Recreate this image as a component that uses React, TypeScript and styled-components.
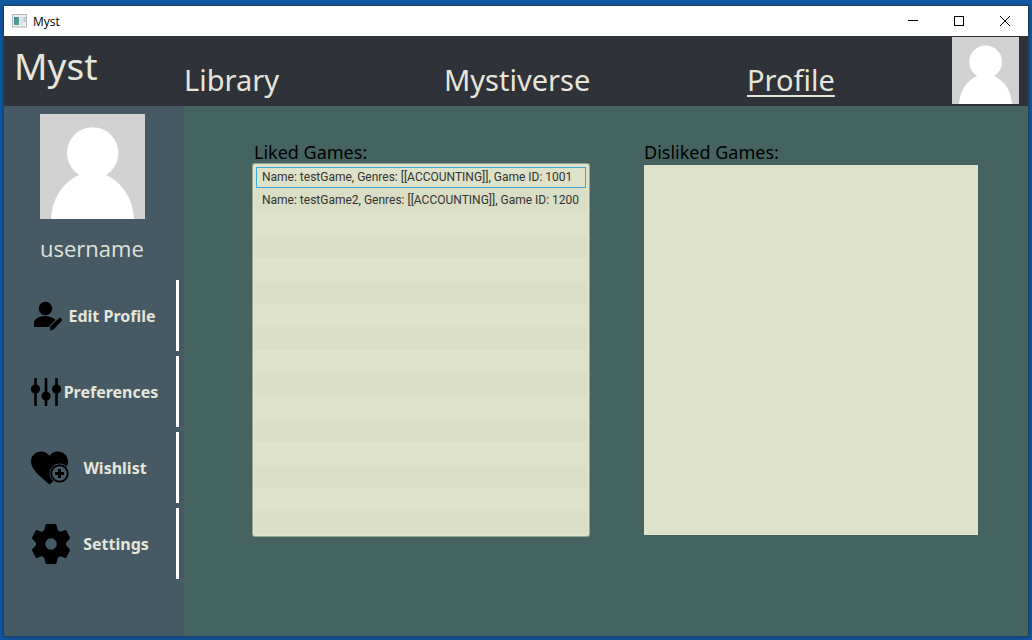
import React from "react";
import styled, { createGlobalStyle } from "styled-components";

const comic = `"Comic Sans MS", "Noto Sans", sans-serif`;
const ui = `"Segoe UI", "Open Sans", sans-serif`;
const listFont = `"Segoe UI", Roboto, sans-serif`;

const GlobalStyle = createGlobalStyle`
  *, *::before, *::after { box-sizing: border-box; }
  body { margin: 0; background: #1158a3; font-family: ${ui}; }
  p, h1, h2, ul { margin: 0; padding: 0; }
  svg { display: block; flex: none; }
`;

const Desktop = styled.div`
  min-height: 100vh;
  padding: 6px 4px 4px;
  display: flex;
`;

const Window = styled.div`
  flex: 1;
  display: flex;
  flex-direction: column;
  background: #456461;
  box-shadow: 0 0 0 1px #1d3f63, 0 1px 5px 1px #0c4078;
`;

const TitleBar = styled.header`
  height: 30px;
  padding-left: 8px;
  display: flex;
  align-items: center;
  gap: 6px;
  background: #ffffff;
  color: #000000;
  font-size: 12px;
`;

const WindowTitle = styled.span`
  flex: 1;
`;

const WindowControls = styled.div`
  display: flex;
`;

const WindowButton = styled.button`
  width: 46px;
  height: 30px;
  padding: 0;
  border: 0;
  background: transparent;
  display: grid;
  place-items: center;
`;

const NavBar = styled.nav`
  height: 70px;
  padding: 1px 9px 0 0;
  display: grid;
  grid-template-columns: 180px 260fr 303fr 205fr auto;
  align-items: start;
  background: #2f3239;
`;

const Brand = styled.h1`
  padding: 5px 0 0 10px;
  color: #e6e5da;
  font: 400 37px/48px ${comic};
`;

const NavLink = styled.a<{ $active?: boolean }>`
  justify-self: start;
  margin-top: 25px;
  color: #e6e5da;
  font: 400 29px/36px ${comic};
  text-decoration: ${(p) => (p.$active ? "underline" : "none")};
  text-decoration-thickness: 2px;
  text-underline-offset: 4px;
`;

const Body = styled.div`
  flex: 1;
  display: flex;
`;

const Sidebar = styled.aside`
  width: 180px;
  padding: 8px 5px 16px 0;
  display: flex;
  flex-direction: column;
  background: #455a64;
`;

const UserCard = styled.div`
  padding-left: 36px;
  height: 166px;
`;

const UserName = styled.p`
  margin-top: 13px;
  color: #e0e2dc;
  font: 400 22px/32px ${ui};
`;

const Menu = styled.div`
  display: flex;
  flex-direction: column;
  gap: 5px;
`;

const MenuButton = styled.button`
  height: 71px;
  padding: 0 15px 0 27px;
  display: flex;
  align-items: center;
  border: 0;
  border-right: 3px solid #ffffff;
  background: transparent;
  color: #e6e5da;
  font: 700 16px/20px ${comic};
`;

const MenuLabel = styled.span`
  flex: 1;
  text-align: center;
  white-space: nowrap;
`;

const Content = styled.main`
  flex: 1;
  min-width: 0;
  padding: 34px 50px 24px 70px;
  display: grid;
  grid-template-columns: minmax(0, 1fr) minmax(0, 1fr);
  gap: 56px;
  align-items: start;
`;

const ListTitle = styled.h2`
  margin: 0 0 1px -2px;
  padding-left: 2px;
  color: #000000;
  font: 400 18px/24px ${comic};
`;

const GameList = styled.ul<{ $focused?: boolean }>`
  min-height: 370px;
  padding: 1px;
  list-style: none;
  background: #dde2c8;
  box-shadow: ${(p) => (p.$focused ? "0 0 0 1px #dde2c8, 0 0 0 2px #91a695" : "none")};
  border-radius: ${(p) => (p.$focused ? "1px" : "0")};
`;

const GameRow = styled.li<{ $selected?: boolean }>`
  height: 23px;
  padding: 0 6px;
  border: 1px solid transparent;
  color: #333333;
  font: 400 12px/21px ${listFont};
  white-space: nowrap;
  outline: ${(p) => (p.$selected ? "1px solid #39a9d8" : "none")};
  outline-offset: -2px;
  &:nth-child(even) {
    background: #d9dec4;
  }
`;

const Avatar = ({ size }: { size: number }) => (
  <svg width={size} height={size} viewBox="0 0 105 105" role="img" aria-label="Profile picture">
    <rect width="105" height="105" fill="#d2d2d2" />
    <circle cx="52.7" cy="39" r="25.7" fill="#fff" />
    <path d="M11 105C12 85 22 69 39 61H66C83 69 93 85 94 105Z" fill="#fff" />
  </svg>
);

const AppIcon = () => (
  <svg width="15" height="14" viewBox="0 0 15 14" aria-hidden="true">
    <defs>
      <linearGradient id="pane" x1="0" y1="0" x2="1" y2="1">
        <stop offset="0" stopColor="#4682a8" />
        <stop offset="1" stopColor="#58a982" />
      </linearGradient>
    </defs>
    <rect x=".5" y=".5" width="14" height="12.5" fill="#edf0f2" stroke="#b2b5ba" />
    <rect x="2" y="3" width="5" height="8" fill="url(#pane)" />
    <rect x="8" y="3" width="3" height="8" fill="#dcdfe3" />
    <rect x="11.5" y="3" width="2" height="5" fill="#a8c5d5" />
  </svg>
);

const EditProfileIcon = () => (
  <svg width="32" height="32" viewBox="0 0 32 32" aria-hidden="true">
    <circle cx="14.5" cy="8.5" r="6.7" />
    <path d="M3 27V23C3 19 8 16 14.5 16C18 16 21 17 24.5 20L18.5 25.5V27Z" />
    <path d="M19 30.5L19.5 26L28.2 18C29.5 17 31.700 19.200 30.800 20.700L22.500 29.500Z" />
  </svg>
);

const SlidersIcon = () => (
  <svg width="30" height="30" viewBox="0 0 30 30" aria-hidden="true">
    <path d="M4.5 1V29M15 1V29M25.5 1V29" stroke="#000" strokeWidth="2.6" />
    <circle cx="4.5" cy="12" r="4.6" />
    <circle cx="15" cy="19" r="4.6" />
    <circle cx="25.5" cy="12" r="4.6" />
  </svg>
);

const HeartPlusIcon = () => (
  <svg width="38" height="36" viewBox="1 0 38 36" aria-hidden="true">
    <path d="M19.5 34.5C12 28 1 20 1 11.5C1 1.500 14 -2 19.500 6C25 -2 38 1.500 38 11.500C38 20 27 28 19.500 34.500Z" />
    <circle cx="29.500" cy="23.500" r="9.500" stroke="#455a64" fill="none" />
    <circle cx="29.500" cy="23.500" r="8.200" stroke="#000" strokeWidth="1.800" fill="#455a64" />
    <path d="M29.500 19V28M25 23.500H34" stroke="#000" strokeWidth="3" />
  </svg>
);

const GearIcon = () => (
  <svg width="40" height="42" viewBox="0 0 40 42" aria-hidden="true">
    <path
      fillRule="evenodd"
      stroke="#000"
      strokeWidth="2"
      strokeLinejoin="round"
      d="M15.500 2H24.500L26 8L29.500 10L34.500 8L38 15L34 19.500V22.500L38 27L34.500 34L29.500 32L26 34L24.500 40H15.500L14 34L10.500 32L5.500 34L2 27L6 22.500V19.500L2 15L5.500 8L10.500 10L14 8ZM20 14.200A6.800 6.800 0 1 0 20 27.800A6.800 6.800 0 1 0 20 14.200Z"
    />
  </svg>
);

const menu = [
  { label: "Edit Profile", Icon: EditProfileIcon },
  { label: "Preferences", Icon: SlidersIcon },
  { label: "Wishlist", Icon: HeartPlusIcon },
  { label: "Settings", Icon: GearIcon },
];

const likedGames = [
  "Name: testGame, Genres: [[ACCOUNTING]], Game ID: 1001",
  "Name: testGame2, Genres: [[ACCOUNTING]], Game ID: 1200",
];

const VISIBLE_ROWS = 16;

export default function App() {
  const rows = Array.from({ length: VISIBLE_ROWS }, (_, i) => likedGames[i] ?? "");
  return (
    <Desktop>
      <GlobalStyle />
      <Window>
        <TitleBar>
          <AppIcon />
          <WindowTitle>Myst</WindowTitle>
          <WindowControls>
            <WindowButton aria-label="Minimize">
              <svg width="10" height="10" viewBox="0 0 10 10"><path d="M0 4.500H10" stroke="#000" /></svg>
            </WindowButton>
            <WindowButton aria-label="Maximize">
              <svg width="10" height="10" viewBox="0 0 10 10"><rect x=".5" y=".5" width="9" height="9" fill="none" stroke="#000" /></svg>
            </WindowButton>
            <WindowButton aria-label="Close">
              <svg width="10" height="10" viewBox="0 0 10 10"><path d="M0 0L10 10M10 0L0 10" stroke="#000" /></svg>
            </WindowButton>
          </WindowControls>
        </TitleBar>
        <NavBar>
          <Brand>Myst</Brand>
          <NavLink href="#library">Library</NavLink>
          <NavLink href="#mystiverse">Mystiverse</NavLink>
          <NavLink href="#profile" $active aria-current="page">Profile</NavLink>
          <Avatar size={67} />
        </NavBar>
        <Body>
          <Sidebar>
            <UserCard>
              <Avatar size={105} />
              <UserName>username</UserName>
            </UserCard>
            <Menu>
              {menu.map(({ label, Icon }) => (
                <MenuButton key={label}>
                  <Icon />
                  <MenuLabel>{label}</MenuLabel>
                </MenuButton>
              ))}
            </Menu>
          </Sidebar>
          <Content>
            <section>
              <ListTitle id="liked">Liked Games:</ListTitle>
              <GameList aria-labelledby="liked" $focused>
                {rows.map((text, i) => (
                  <GameRow key={i} $selected={i === 0}>{text}</GameRow>
                ))}
              </GameList>
            </section>
            <section>
              <ListTitle id="disliked">Disliked Games:</ListTitle>
              <GameList aria-labelledby="disliked" />
            </section>
          </Content>
        </Body>
      </Window>
    </Desktop>
  );
}
